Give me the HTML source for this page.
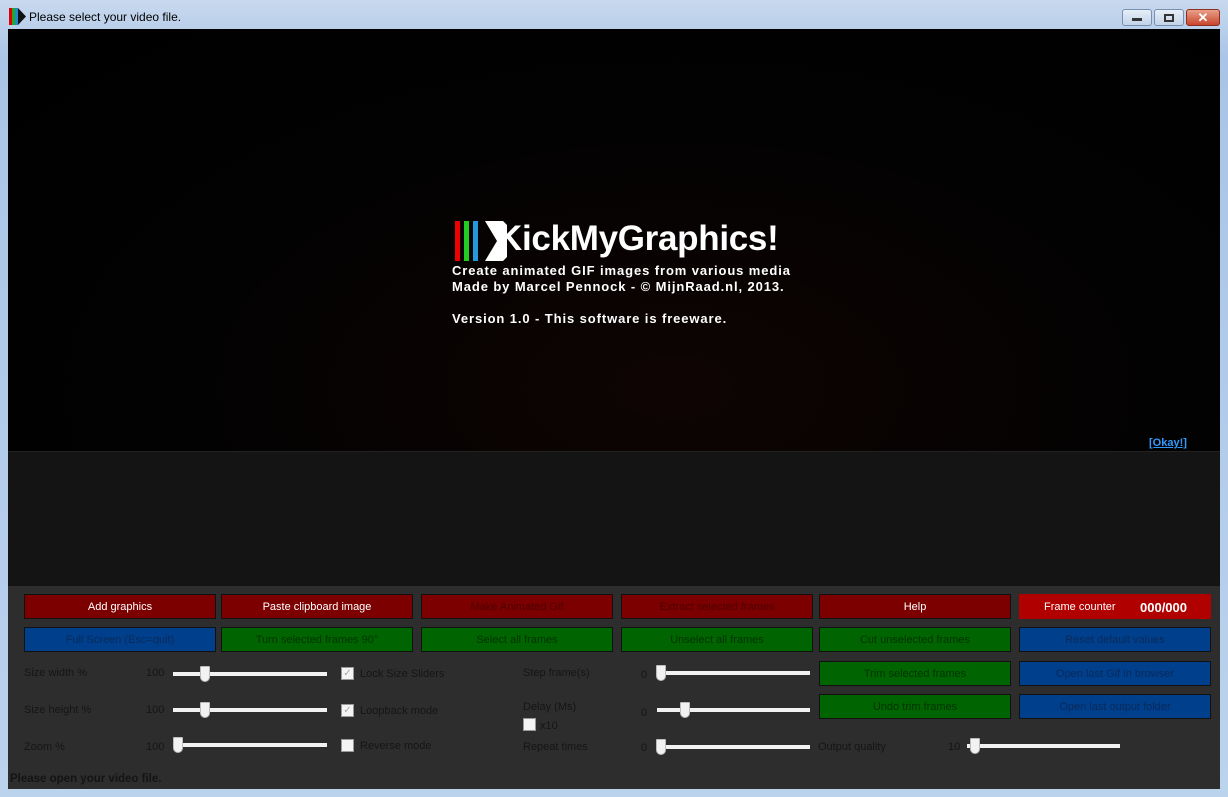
<!DOCTYPE html><html><head><style>
*{margin:0;padding:0;box-sizing:border-box}
body{width:1228px;height:797px;overflow:hidden;background:linear-gradient(#c9d9ee,#a9c4e6 60px,#bcd3ee);font-family:"Liberation Sans",sans-serif;position:relative}
.a{position:absolute}
.t{font-size:11px;color:#151515;white-space:nowrap}
.b{position:absolute;height:25px;width:192px;font-size:11px;text-align:center;line-height:25px;border:1px solid #111}
.r{background:#7d0000;color:#4d0000}.rw{background:#7d0000;color:#fff}
.g{background:#006400;color:#003400}.bl{background:#003f8c;color:#0a2a5a}
.tr{position:absolute;height:4px;background:#f2f2f2}
.th{position:absolute;width:10px;height:16px;background:#f2f2f2;border:1px solid #bbb;border-radius:1px 1px 5px 5px}
.cb{position:absolute;width:13px;height:13px;background:#f4f4f4;border:1px solid #999;font-size:10px;color:#aaa;line-height:11px;text-align:center}
</style></head><body>
<div class="a" style="left:9px;top:8px;width:16px;height:17px">
<div class="a" style="left:0;top:0;width:3px;height:17px;background:#d00"></div><div class="a" style="left:3px;top:0;width:3px;height:17px;background:#2a2"></div><div class="a" style="left:6px;top:0;width:3px;height:17px;background:#28c"></div>
<svg class="a" style="left:9px;top:0" width="8" height="17"><polygon points="0,0 8,8.5 0,17" fill="#111"/></svg></div>
<div class="a" style="left:29px;top:10px;font-size:12px;color:#000">Please select your video file.</div>
<div class="a" style="left:1122px;top:9px;width:30px;height:17px;border:1px solid #7890b0;border-radius:3px;background:linear-gradient(#e6eef8,#c3d3e8)"><div class="a" style="left:9px;top:8px;width:10px;height:3px;background:#333"></div></div>
<div class="a" style="left:1154px;top:9px;width:30px;height:17px;border:1px solid #7890b0;border-radius:3px;background:linear-gradient(#e6eef8,#c3d3e8)"><div class="a" style="left:9px;top:4px;width:10px;height:8px;border:2px solid #333"></div></div>
<div class="a" style="left:1186px;top:9px;width:34px;height:17px;border:1px solid #8a3020;border-radius:3px;background:linear-gradient(#eaa08a,#c8452c);color:#fff;font-size:13px;font-weight:bold;text-align:center;line-height:15px">✕</div>
<div class="a" style="left:8px;top:29px;width:1212px;height:422px;background:radial-gradient(ellipse at 55% 85%,#0e0403,#030202 50%,#000)"></div>
<div class="a" style="left:8px;top:451px;width:1212px;height:135px;background:#141414;border-top:1px solid #222"></div>
<div class="a" style="left:8px;top:586px;width:1212px;height:203px;background:#2d2d2d"></div>
<div class="a" style="left:455px;top:221px;width:5px;height:40px;background:#e00"></div>
<div class="a" style="left:464px;top:221px;width:5px;height:40px;background:#2c2"></div>
<div class="a" style="left:473px;top:221px;width:5px;height:40px;background:#29d"></div>
<svg class="a" style="left:485px;top:221px" width="22" height="40"><polygon points="0,0 18,0 22,4 22,36 18,40 0,40 12,20" fill="#fff"/></svg>
<div class="a" style="left:497px;top:219px;font-size:35px;font-weight:bold;color:#fff;letter-spacing:-0.3px">KickMyGraphics!</div>
<div class="a" style="left:452px;top:263px;font-size:13px;font-weight:bold;color:#fff;line-height:16px;letter-spacing:0.9px">Create animated GIF images from various media<br>Made by Marcel Pennock - © MijnRaad.nl, 2013.</div>
<div class="a" style="left:452px;top:311px;font-size:13px;font-weight:bold;color:#fff;letter-spacing:0.9px">Version 1.0 - This software is freeware.</div>
<div class="a" style="left:1149px;top:437px;font-size:11px;font-weight:bold;color:#39f;text-decoration:underline">[Okay!]</div>
<div class="b rw" style="left:24px;top:594px">Add graphics</div>
<div class="b rw" style="left:221px;top:594px">Paste clipboard image</div>
<div class="b r" style="left:421px;top:594px">Make Animated Gif</div>
<div class="b r" style="left:621px;top:594px">Extract selected frames</div>
<div class="b rw" style="left:819px;top:594px">Help</div>
<div class="b" style="left:1019px;top:594px;background:#b00000;color:#fff;border-color:#b00000;text-align:left;padding-left:24px">Frame counter<span style="position:absolute;left:120px;font-size:13px;font-weight:bold">000/000</span></div>
<div class="b bl" style="left:24px;top:627px">Full Screen (Esc=quit)</div>
<div class="b g" style="left:221px;top:627px">Turn selected frames 90°</div>
<div class="b g" style="left:421px;top:627px">Select all frames</div>
<div class="b g" style="left:621px;top:627px">Unselect all frames</div>
<div class="b g" style="left:819px;top:627px">Cut unselected frames</div>
<div class="b bl" style="left:1019px;top:627px">Reset default values</div>
<div class="b g" style="left:819px;top:661px">Trim selected frames</div>
<div class="b bl" style="left:1019px;top:661px">Open last Gif in browser</div>
<div class="b g" style="left:819px;top:694px">Undo trim frames</div>
<div class="b bl" style="left:1019px;top:694px">Open last output folder</div>
<div class="a t" style="left:24px;top:667px">Size width %</div>
<div class="a t" style="left:24px;top:704px">Size height %</div>
<div class="a t" style="left:24px;top:741px">Zoom %</div>
<div class="a t" style="left:146px;top:667px">100</div>
<div class="a t" style="left:146px;top:704px">100</div>
<div class="a t" style="left:146px;top:741px">100</div>
<div class="tr" style="left:173px;top:672px;width:154px"></div><div class="th" style="left:200px;top:666px"></div>
<div class="tr" style="left:173px;top:708px;width:154px"></div><div class="th" style="left:200px;top:702px"></div>
<div class="tr" style="left:173px;top:743px;width:154px"></div><div class="th" style="left:173px;top:737px"></div>
<div class="cb" style="left:341px;top:667px">✓</div><div class="a t" style="left:360px;top:668px">Lock Size Sliders</div>
<div class="cb" style="left:341px;top:704px">✓</div><div class="a t" style="left:360px;top:705px">Loopback mode</div>
<div class="cb" style="left:341px;top:739px"></div><div class="a t" style="left:360px;top:740px">Reverse mode</div>
<div class="a t" style="left:523px;top:667px">Step frame(s)</div>
<div class="a t" style="left:523px;top:701px">Delay (Ms)</div>
<div class="cb" style="left:523px;top:718px"></div><div class="a t" style="left:540px;top:720px">x10</div>
<div class="a t" style="left:523px;top:741px">Repeat times</div>
<div class="a t" style="left:641px;top:669px">0</div>
<div class="a t" style="left:641px;top:707px">0</div>
<div class="a t" style="left:641px;top:742px">0</div>
<div class="tr" style="left:657px;top:671px;width:153px"></div><div class="th" style="left:656px;top:665px"></div>
<div class="tr" style="left:657px;top:708px;width:153px"></div><div class="th" style="left:680px;top:702px"></div>
<div class="tr" style="left:657px;top:745px;width:153px"></div><div class="th" style="left:656px;top:739px"></div>
<div class="a t" style="left:818px;top:741px">Output quality</div>
<div class="a t" style="left:948px;top:741px">10</div>
<div class="tr" style="left:967px;top:744px;width:153px"></div><div class="th" style="left:970px;top:738px"></div>
<div class="a" style="left:10px;top:773px;font-size:11.5px;font-weight:bold;color:#141414">Please open your video file.</div>
</body></html>
